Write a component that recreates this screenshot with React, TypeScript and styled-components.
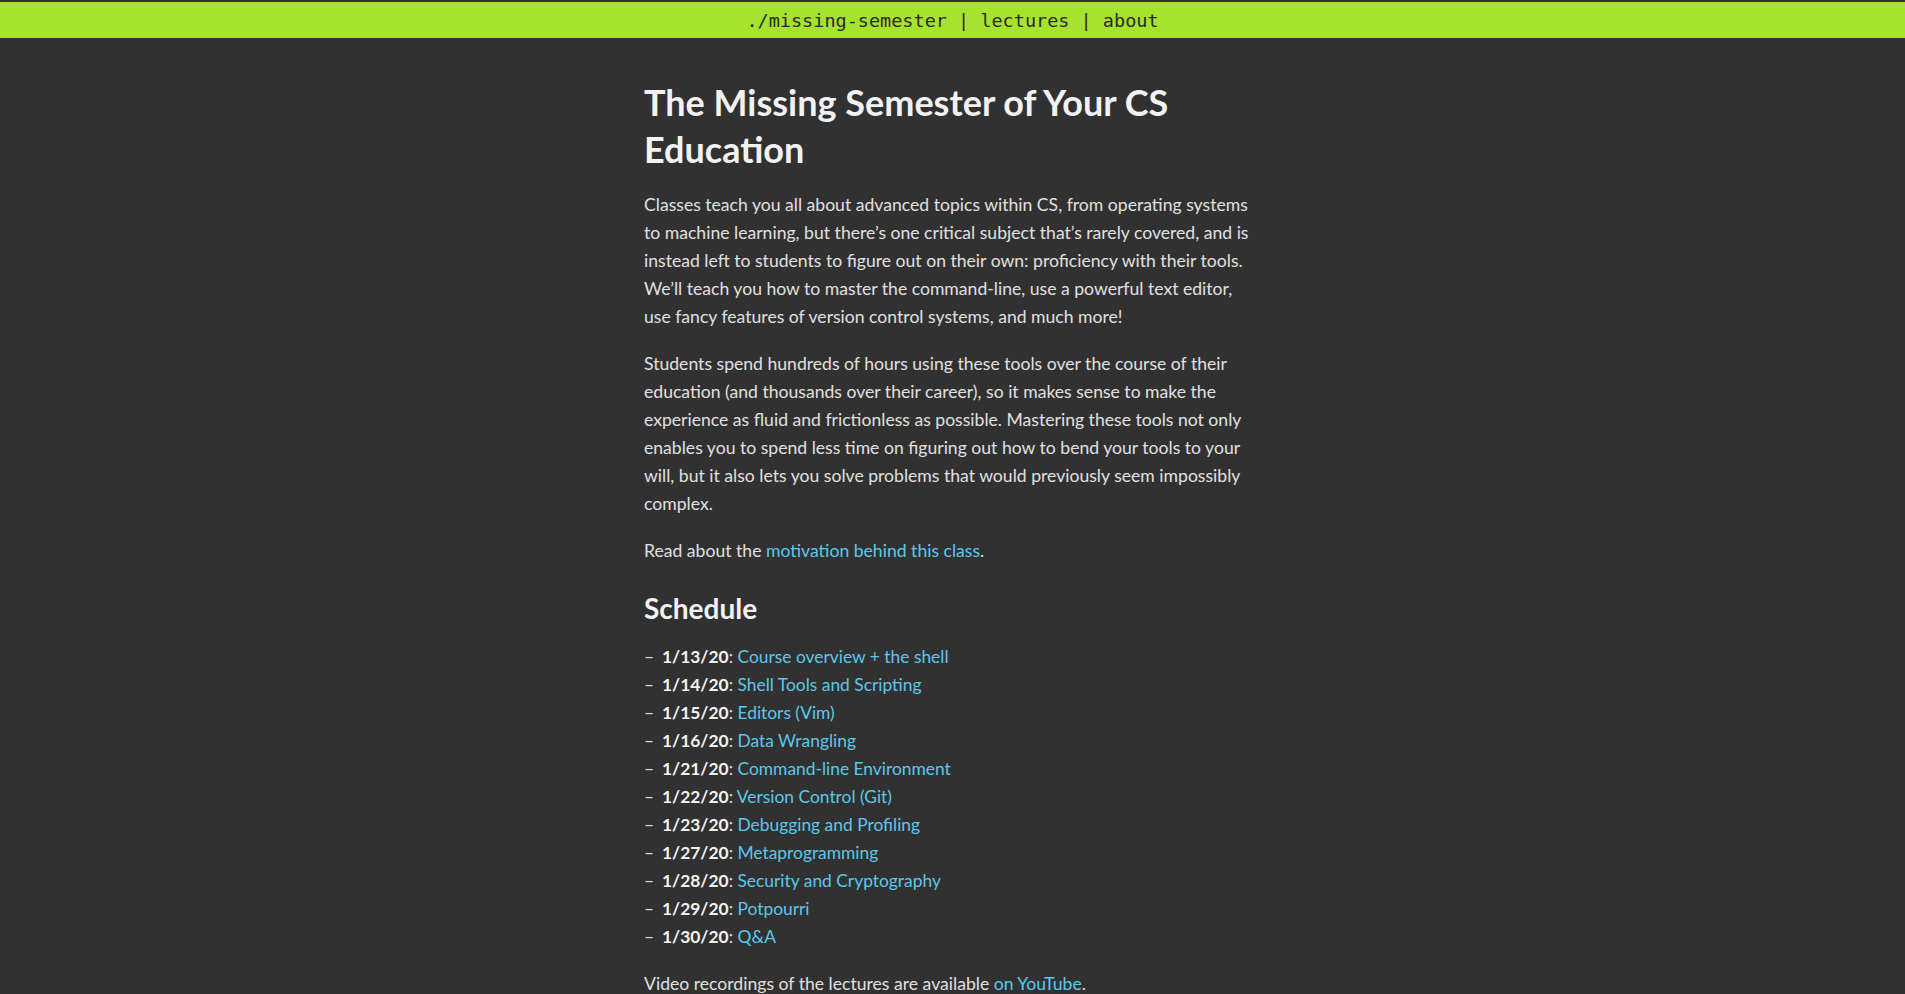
import React from "react";
import styled, { createGlobalStyle } from "styled-components";

const GlobalStyle = createGlobalStyle`
  html, body {
    margin: 0;
    padding: 0;
    background-color: #313131;
  }
  body {
    font-family: Lato, "Liberation Sans", sans-serif;
    color: #e0e0e0;
  }
`;

const NavBar = styled.nav`
  border-top: 2px solid #313131;
  background-color: #a6e22e;
  height: 36px;
  display: flex;
  align-items: center;
  justify-content: center;
  font-family: "DejaVu Sans Mono", "Liberation Mono", monospace;
  font-size: 18.5px;
  color: #2a2a2a;
  white-space: pre;
`;

const NavLink = styled.a`
  color: inherit;
  text-decoration: none;
`;

const Container = styled.main`
  width: 617px;
  margin: 0 auto;
  padding-top: 41px;
`;

const Title = styled.h1`
  font-size: 36px;
  line-height: 47px;
  font-weight: 700;
  color: #f2f2f2;
  margin: 0 0 18px;
`;

const Paragraph = styled.p`
  font-size: 17.6px;
  line-height: 28px;
  margin: 0 0 19px;
`;

const Link = styled.a`
  color: #5bc8ec;
  text-decoration: none;
`;

const SectionTitle = styled.h2`
  font-size: 28px;
  line-height: 34px;
  font-weight: 700;
  color: #f2f2f2;
  margin: 26px 0 18px;
`;

const Schedule = styled.ul`
  list-style: none;
  margin: 0 0 19px;
  padding: 0;
`;

const Lecture = styled.li`
  font-size: 17.4px;
  line-height: 28px;
  &::before {
    content: "–";
    display: inline-block;
    width: 18px;
  }
`;

const LectureDate = styled.strong`
  font-weight: 700;
  color: #f2f2f2;
`;

const lectures = [
  ["1/13/20", "Course overview + the shell"],
  ["1/14/20", "Shell Tools and Scripting"],
  ["1/15/20", "Editors (Vim)"],
  ["1/16/20", "Data Wrangling"],
  ["1/21/20", "Command-line Environment"],
  ["1/22/20", "Version Control (Git)"],
  ["1/23/20", "Debugging and Profiling"],
  ["1/27/20", "Metaprogramming"],
  ["1/28/20", "Security and Cryptography"],
  ["1/29/20", "Potpourri"],
  ["1/30/20", "Q&A"],
];

const App: React.FC = () => {
  return (
    <>
      <GlobalStyle />
      <NavBar>
        <NavLink href="#">./missing-semester</NavLink>
        {" | "}
        <NavLink href="#">lectures</NavLink>
        {" | "}
        <NavLink href="#">about</NavLink>
      </NavBar>
      <Container>
        <Title>The Missing Semester of Your CS Education</Title>
        <Paragraph>
          Classes teach you all about advanced topics within CS, from operating
          systems to machine learning, but there’s one critical subject that’s
          rarely covered, and is instead left to students to figure out on their
          own: proficiency with their tools. We’ll teach you how to master the
          command-line, use a powerful text editor, use fancy features of
          version control systems, and much more!
        </Paragraph>
        <Paragraph>
          Students spend hundreds of hours using these tools over the course of
          their education (and thousands over their career), so it makes sense
          to make the experience as fluid and frictionless as possible.
          Mastering these tools not only enables you to spend less time on
          figuring out how to bend your tools to your will, but it also lets you
          solve problems that would previously seem impossibly complex.
        </Paragraph>
        <Paragraph>
          Read about the <Link href="#">motivation behind this class</Link>.
        </Paragraph>
        <SectionTitle>Schedule</SectionTitle>
        <Schedule>
          {lectures.map(([date, name]) => (
            <Lecture key={date}>
              <LectureDate>{date}</LectureDate>:{" "}
              <Link href="#">{name}</Link>
            </Lecture>
          ))}
        </Schedule>
        <Paragraph>
          Video recordings of the lectures are available{" "}
          <Link href="#">on YouTube</Link>.
        </Paragraph>
      </Container>
    </>
  );
};

export default App;
